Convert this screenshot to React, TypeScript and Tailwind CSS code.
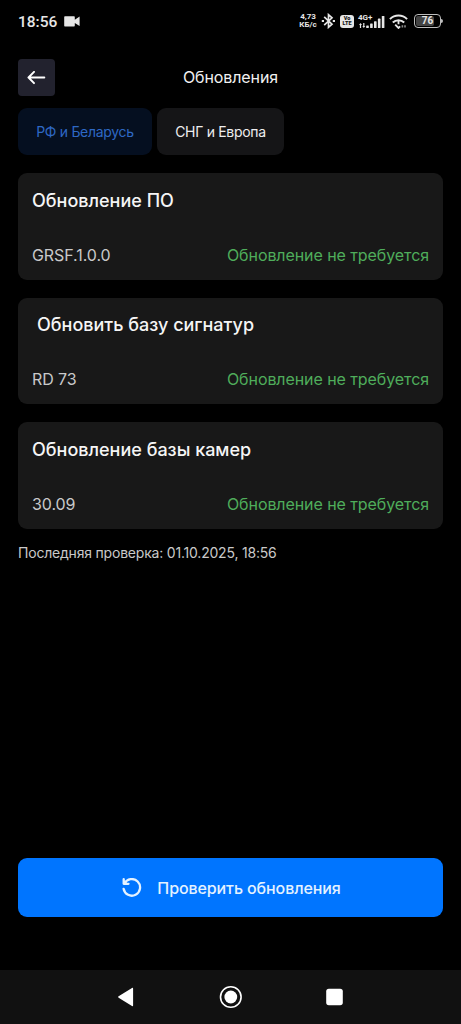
const regions = [
  { label: "РФ и Беларусь", active: true, width: "w-[134px]" },
  { label: "СНГ и Европа", active: false, width: "w-[127px]" },
];

const updates = [
  { title: "Обновление ПО", version: "GRSF.1.0.0", indent: false },
  { title: "Обновить базу сигнатур", version: "RD 73", indent: true },
  { title: "Обновление базы камер", version: "30.09", indent: false },
];

function StatusBar() {
  return (
    <div className="flex h-[42px] shrink-0 items-center justify-between pl-[18px] pr-[18px] text-[#e6e6e6]">
      <div className="flex items-center gap-[7px]">
        <span className="w-[39px] whitespace-nowrap pt-px font-[Roboto] text-[15.5px] font-medium leading-5">18:56</span>
        <svg width="16" height="11" viewBox="0 0 16 11" fill="currentColor">
          <path d="M1.2.3h8.6c.6 0 1 .4 1 1v2.4L15.6.6v9.4l-4.8-3.1v2.7c0 .6-.4 1-1 1H1.2c-.6 0-1-.4-1-1V1.3c0-.6.4-1 1-1Z" />
        </svg>
      </div>

      <div className="flex items-center">
        <div className="mr-1 w-[18px] whitespace-nowrap text-center font-[Roboto] text-[8px] font-bold leading-[8px]">
          <div>4,73</div>
          <div>КБ/с</div>
        </div>

        {/* Bluetooth */}
        <svg className="mr-1" width="15" height="16" viewBox="0 0 15 16" fill="none" stroke="currentColor" strokeWidth="1.7">
          <path d="M3.2 3.8 11 11.2 7.5 14.3V1.7L11 4.8 3.2 12.2" />
          <path d="M.8 8H3M11.8 8H14" strokeWidth="2.2" />
        </svg>

        <div className="mr-1 flex h-[13px] w-[14px] flex-col items-center justify-center rounded-[3px] bg-[#e6e6e6] font-[Roboto] text-[5.5px] font-black leading-[5.5px] text-[#111]">
          <span>Vo</span>
          <span>LTE</span>
        </div>

        {/* Cellular signal */}
        <div className="relative mr-[4px] h-[15px] w-[27px]">
          <span className="absolute -top-px left-0 font-[Roboto] text-[8px] font-bold leading-[9px]">4G+</span>
          <svg className="absolute inset-0" width="27" height="15" viewBox="0 0 27 15" fill="currentColor">
            <path d="M2.5 9 4 11H3.1v3H1.9v-3H1ZM5.8 14l-1.5-2h.9V9h1.2v3h.9Z" />
            <rect x="8.2" y="11.5" width="2.6" height="2.5" rx=".6" />
            <rect x="12.1" y="9.5" width="2.6" height="4.5" rx=".6" />
            <rect x="16" y="7.2" width="2.6" height="6.8" rx=".6" />
            <rect x="19.9" y="4.6" width="2.6" height="9.4" rx=".6" />
            <rect x="23.8" y="2" width="2.6" height="12" rx=".6" />
          </svg>
        </div>

        {/* Wi-Fi */}
        <svg className="mr-[6px]" width="19" height="15" viewBox="0 0 19 15" fill="none" stroke="currentColor" strokeWidth="2">
          <path d="M.9 5.1a12.3 12.3 0 0 1 17.2 0M3.8 8.5a8.2 8.2 0 0 1 11.4 0" />
          <path d="M9.5 6v4.2M6.2 10.6l3.3 3.4 1.6-1.6" strokeWidth="1.8" />
          <path d="M13.4 11.3v2.2M16 11.3v2.2" strokeWidth="1.6" opacity=".6" />
        </svg>

        {/* Battery */}
        <div className="relative flex h-[14px] w-[27px] items-center justify-center overflow-hidden rounded-[4px] border-[1.5px] border-[#bdbdbd] bg-black">
          <div className="absolute inset-y-px left-px w-[18px] rounded-[2px] bg-[#444]" />
          <span className="relative font-[Roboto] text-[10px] font-bold leading-none">76</span>
        </div>
        <div className="h-[4px] w-[2px] rounded-r-sm bg-[#bdbdbd]" />
      </div>
    </div>
  );
}

function Header() {
  return (
    <header className="mt-[17px] grid h-[37px] grid-cols-[37px_1fr_37px] items-center">
      <button className="flex h-[37px] w-[37px] items-center justify-center rounded-[4px] bg-[#22222e]">
        <svg width="19" height="14" viewBox="0 0 19 14" fill="none" stroke="white" strokeWidth="2" strokeLinecap="round" strokeLinejoin="round">
          <path d="M17.3 6.5H1.5M7 .9 1.5 6.5 7 12.1" />
        </svg>
      </button>
      <h1 className="pb-[2px] text-center text-[16px] leading-5 tracking-[-0.1px] text-[#f1f1f1]">Обновления</h1>
    </header>
  );
}

function UpdateCard({ title, version, indent }: { title: string; version: string; indent: boolean }) {
  return (
    <section className="flex h-[106.5px] flex-col justify-between rounded-[9px] bg-[#181818] px-[14px] pb-[14px] pt-[15.5px]">
      <h2 className={`text-[18px] font-medium leading-6 text-[#f5f5f5] ${indent ? "pl-[5px]" : ""}`}>{title}</h2>
      <div className="flex items-center justify-between text-[16px] leading-[22px] tracking-[-0.08px]">
        <span className="text-[#c9c9ca]">{version}</span>
        <span className="text-[#4fad5b]">Обновление не требуется</span>
      </div>
    </section>
  );
}

function NavigationBar() {
  return (
    <nav className="flex h-[54px] shrink-0 items-center justify-center gap-[80px] bg-[#111] text-white">
      <svg width="24" height="24" viewBox="0 0 24 24" fill="currentColor">
        <path d="M3.6 11.3 17 2.9c.6-.4 1.1-.1 1.1.6v17c0 .7-.5 1-1.1.6L3.6 12.7c-.6-.4-.6-1 0-1.4Z" />
      </svg>
      <svg width="24" height="24" viewBox="0 0 24 24">
        <circle cx="11.8" cy="12" r="10.3" fill="none" stroke="currentColor" strokeWidth="1.6" />
        <circle cx="11.8" cy="12" r="6.4" fill="currentColor" />
      </svg>
      <svg width="24" height="24" viewBox="0 0 24 24" fill="currentColor">
        <rect x="3.2" y="3.8" width="16.6" height="16.4" rx="2.6" />
      </svg>
    </nav>
  );
}

export default function App() {
  return (
    <div className="flex h-[1024px] w-[461px] flex-col overflow-hidden bg-black font-[Inter,sans-serif]">
      <StatusBar />

      <main className="flex flex-1 flex-col px-[18px]">
        <Header />

        <div className="mt-[12px] flex gap-[5px]">
          {regions.map((r) => (
            <button
              key={r.label}
              className={`h-[47px] rounded-[9px] text-[14px] tracking-[-0.3px] ${r.width} ${
                r.active ? "bg-[#050f20] text-[#2e68c4]" : "bg-[#151517] text-[#eeeeef]"
              }`}
            >
              {r.label}
            </button>
          ))}
        </div>

        <div className="mt-[18px] flex flex-col gap-[18px]">
          {updates.map((u) => (
            <UpdateCard key={u.title} {...u} />
          ))}
        </div>

        <p className="mt-[14px] text-[14px] leading-5 tracking-[-0.2px] text-[#c9c9c9]">Последняя проверка: 01.10.2025, 18:56</p>

        <button className="mb-[53px] mt-auto flex h-[59px] items-center justify-center gap-[15px] rounded-[9px] bg-[#0075ff] pl-[2px] text-[16px] font-medium tracking-[-0.1px] text-[#e4f2ff]">
          <svg width="20" height="20" viewBox="0 0 20 20" fill="none" stroke="currentColor" strokeWidth="2.3" strokeLinecap="round" strokeLinejoin="round">
            <path d="M1.7 1.2v4.6h4.8M2.4 5.6A8.3 8.3 0 1 1 1.6 10.8" />
          </svg>
          <span>Проверить обновления</span>
        </button>
      </main>

      <NavigationBar />
    </div>
  );
}
